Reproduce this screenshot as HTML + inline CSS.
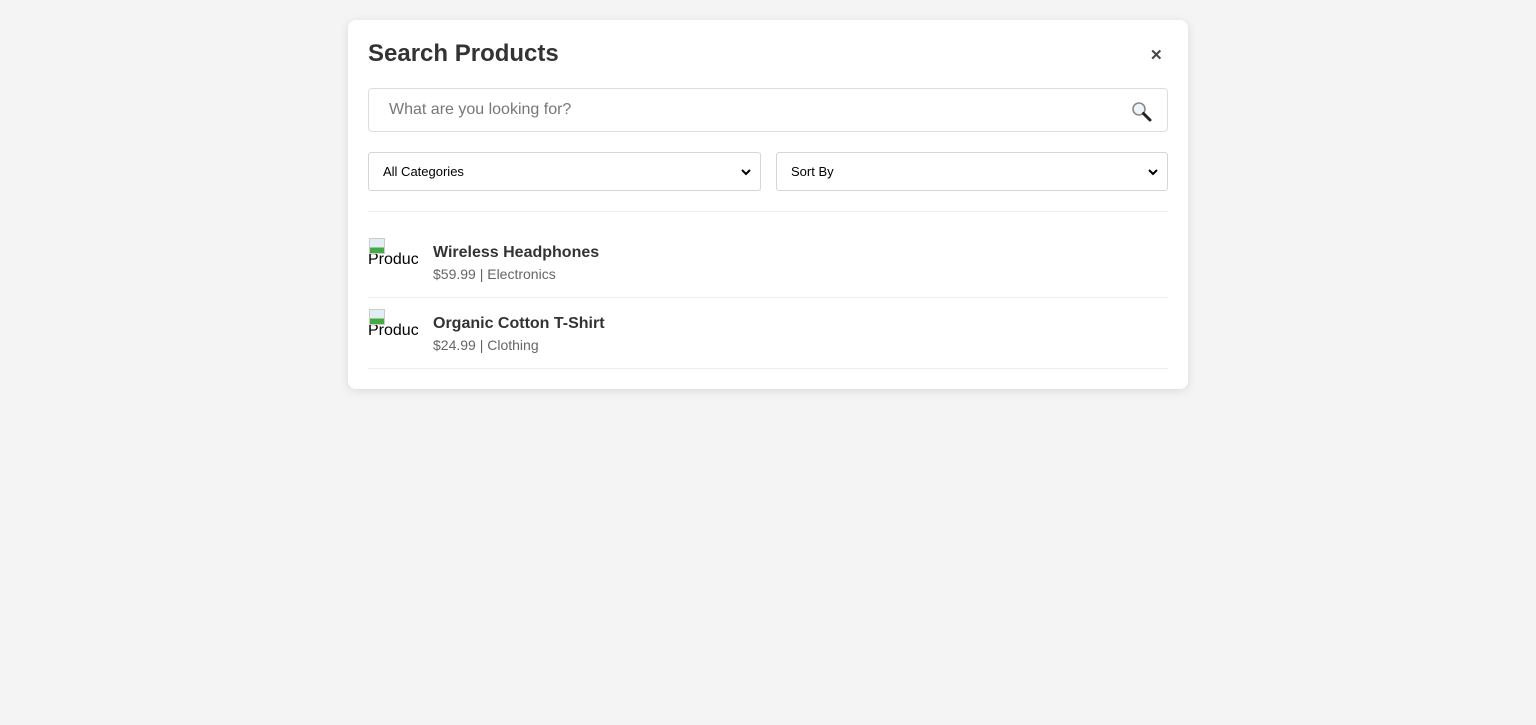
<!DOCTYPE html>
<html><head><style>
*{box-sizing:border-box}
body{margin:0;background:#f4f4f4;font-family:"Liberation Sans",Arial,sans-serif;width:1536px;height:725px;overflow:hidden}
.card{position:absolute;left:348px;top:20px;width:840px;height:369px;background:#fff;border-radius:8px;box-shadow:0 2px 10px rgba(0,0,0,.1);padding:20px}
h1{position:absolute;left:20px;top:20px;margin:0;font-size:24px;line-height:28px;color:#333;font-weight:bold}
.x{position:absolute;left:802px;top:26px;font-size:15px;color:#444;font-weight:bold}
.inp{position:absolute;left:20px;top:68px;width:800px;height:44px;border:1px solid #ddd;border-radius:4px;font-size:16px;color:#777;padding:12px 20px;line-height:18px}
.sel{position:absolute;top:132px;height:39px;border:1px solid #d6d6d6;border-radius:3px;font-size:13px;color:#000;padding:11px 14px}
.sel svg{position:absolute;right:9px;top:15px}
.hr{position:absolute;left:20px;top:191px;width:800px;border-top:1px solid #eee}
.item{position:absolute;left:20px;width:800px;height:71px;border-bottom:1px solid #eee}
.img{position:absolute;left:0;top:10px;width:50px;height:50px;overflow:hidden;font-size:16px;color:#000;line-height:18px;padding-top:14px}
.img i{position:absolute;left:1px;top:1px;width:16px;height:16px;border:1px solid #ccc;background:linear-gradient(#e4ecf4 60%,#4a4 60%)}
.nm{position:absolute;left:65px;top:17px;font-size:16px;font-weight:bold;color:#333}
.mt{position:absolute;left:65px;top:39px;font-size:14px;color:#666}
</style></head><body>
<div class="card">
<h1>Search Products</h1>
<div class="x">✕</div>
<div class="inp">What are you looking for?
<svg style="position:absolute;right:14px;top:12px" width="22" height="22" viewBox="0 0 22 22"><circle cx="8" cy="8" r="6" fill="#eef4fa" stroke="#888" stroke-width="1.6"/><path d="M12.5 12.5L19 19" stroke="#222" stroke-width="3" stroke-linecap="round"/></svg></div>
<div class="sel" style="left:20px;width:393px">All Categories<svg width="10" height="8" viewBox="0 0 10 8"><path d="M1 2l4 4 4-4" stroke="#000" stroke-width="2" fill="none"/></svg></div>
<div class="sel" style="left:428px;width:392px">Sort By<svg width="10" height="8" viewBox="0 0 10 8"><path d="M1 2l4 4 4-4" stroke="#000" stroke-width="2" fill="none"/></svg></div>
<div class="hr"></div>
<div class="item" style="top:207px"><div class="img"><i></i>Product</div><div class="nm">Wireless Headphones</div><div class="mt">$59.99 | Electronics</div></div>
<div class="item" style="top:278px"><div class="img"><i></i>Product</div><div class="nm">Organic Cotton T-Shirt</div><div class="mt">$24.99 | Clothing</div></div>
</div>
</body></html>
